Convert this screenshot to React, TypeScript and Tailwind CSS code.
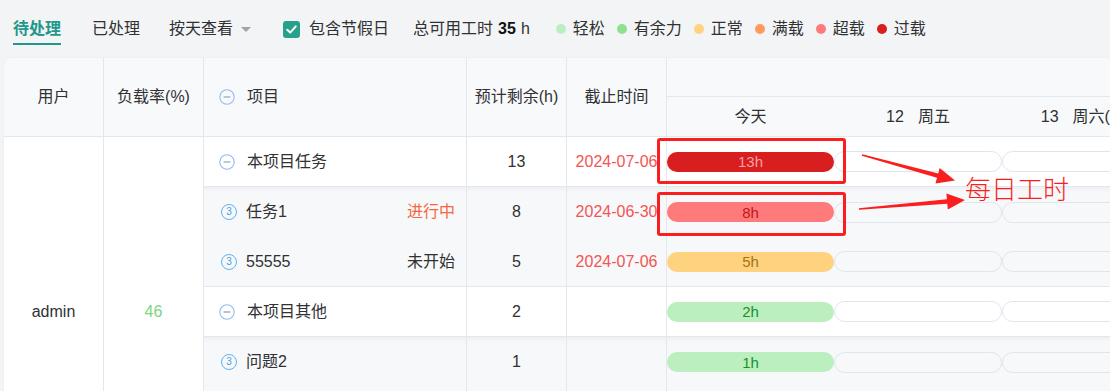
import React from "react";

type Level = "light" | "spare" | "normal" | "full" | "over" | "overload";

interface Row {
  name: string;
  kind: "group" | "task";
  status?: string;
  statusColor?: string;
  remain: string;
  due?: string;
  hours?: string;
  level?: Level;
  hidden?: boolean;
}

const pillStyle: Record<Level, string> = {
  light: "bg-[#bbefc0] text-[#1b912d]",
  spare: "bg-[#8fe08f] text-[#17702a]",
  normal: "bg-[#ffd27f] text-[#a27419]",
  full: "bg-[#ff9a5c] text-[#9a3d0d]",
  over: "bg-[#ff7b7b] text-[#c3141b]",
  overload: "bg-[#d81e1e] text-[#f3a3a3]",
};

const legend: { label: string; dot: string }[] = [
  { label: "轻松", dot: "bg-[#bbefc0]" },
  { label: "有余力", dot: "bg-[#8ee28e]" },
  { label: "正常", dot: "bg-[#ffd27f]" },
  { label: "满载", dot: "bg-[#ff9a5c]" },
  { label: "超载", dot: "bg-[#ff7b7b]" },
  { label: "过载", dot: "bg-[#d81e1e]" },
];

// last two rows sit below the fold, they only keep "admin" centred
const rows: Row[] = [
  { name: "本项目任务", kind: "group", remain: "13", due: "2024-07-06", hours: "13h", level: "overload" },
  { name: "任务1", kind: "task", status: "进行中", statusColor: "text-[#f5683d]", remain: "8", due: "2024-06-30", hours: "8h", level: "over" },
  { name: "55555", kind: "task", status: "未开始", statusColor: "text-[#303133]", remain: "5", due: "2024-07-06", hours: "5h", level: "normal" },
  { name: "本项目其他", kind: "group", remain: "2", hours: "2h", level: "light" },
  { name: "问题2", kind: "task", remain: "1", hours: "1h", level: "light" },
  { name: "", kind: "task", remain: "", hidden: true },
  { name: "", kind: "group", remain: "", hidden: true },
];

function MinusCircle() {
  return (
    <svg width="16" height="16" viewBox="0 0 16 16" className="shrink-0">
      <circle cx="8" cy="8" r="7.2" fill="none" stroke="#93b9f2" strokeWidth="1.1" />
      <line x1="4.6" y1="8" x2="11.4" y2="8" stroke="#7f95b8" strokeWidth="1.1" />
    </svg>
  );
}

function CountBadge() {
  return (
    <span className="w-[16px] h-[16px] shrink-0 rounded-full border border-[#5ab3f6] text-[#3d9ff0] text-[10px] leading-none flex items-center justify-center ml-[2px]">
      3
    </span>
  );
}

export default function App() {
  return (
    <div className="relative w-[1110px] h-[391px] overflow-hidden bg-[#f3f4f6] text-[#303133] text-[16px] font-['Liberation_Sans','Noto_Sans_CJK_SC',sans-serif]">
      {/* toolbar */}
      <div className="h-[58px] flex items-center pl-[13px] leading-[22px]">
        <span className="mt-[5px] pb-[3px] border-b-2 border-[#21988a] text-[#21988a] font-bold">待处理</span>
        <span className="ml-[31px]">已处理</span>
        <span className="ml-[29px]">按天查看</span>
        <span className="ml-[8px] w-0 h-0 border-l-[5px] border-r-[5px] border-t-[5px] border-l-transparent border-r-transparent border-t-[#a0a4ab]" />
        <span className="ml-[32px] w-[17px] h-[17px] rounded-[3px] bg-[#27a18b] flex items-center justify-center">
          <svg width="13" height="13" viewBox="0 0 13 13">
            <polyline points="2.2,6.8 5.2,9.6 10.8,3.4" fill="none" stroke="white" strokeWidth="2" strokeLinecap="round" strokeLinejoin="round" />
          </svg>
        </span>
        <span className="ml-[9px]">包含节假日</span>
        <span className="ml-[24px]">总可用工时</span>
        <span className="ml-[5px] font-bold text-[#111]">35</span>
        <span className="ml-[5px]">h</span>
        <div className="ml-[26px] flex items-center">
          {legend.map((l, i) => (
            <div key={l.label} className={`flex items-center ${i === 0 ? "" : "ml-[12px]"}`}>
              <span className={`w-[10px] h-[10px] rounded-full ${l.dot}`} />
              <span className="ml-[7px]">{l.label}</span>
            </div>
          ))}
        </div>
      </div>

      {/* table */}
      <div className="ml-[4px] w-[1163px] rounded-tl-[8px] overflow-hidden shadow-[0_0_3px_rgba(0,0,0,0.05)] grid grid-cols-[100px_100px_263px_100px_100px_500px] grid-rows-[79px_repeat(7,50px)] leading-[22px]">
        <div className="bg-[#f8f9fb] border-r border-b border-[#e3e8ef] flex items-center justify-center">用户</div>
        <div className="bg-[#f8f9fb] border-r border-b border-[#e3e8ef] flex items-center justify-center">负载率(%)</div>
        <div className="bg-[#f8f9fb] border-r border-b border-[#e3e8ef] flex items-center pl-[15px]">
          <MinusCircle />
          <span className="ml-[12px]">项目</span>
        </div>
        <div className="bg-[#f8f9fb] border-r border-b border-[#e3e8ef] flex items-center justify-center">预计剩余(h)</div>
        <div className="bg-[#f8f9fb] border-r border-b border-[#e3e8ef] flex items-center justify-center">截止时间</div>
        <div className="bg-[#f8f9fb] border-b border-[#e3e8ef] flex flex-col">
          <div className="h-[39px] border-b border-[#e3e8ef]" />
          <div className="flex-1 flex items-center">
            <div className="w-[167px] shrink-0 text-center">今天</div>
            <div className="w-[168px] shrink-0 text-center">
              12<span className="ml-[14px]">周五</span>
            </div>
            <div className="w-[168px] shrink-0 text-center whitespace-nowrap">
              13<span className="ml-[14px]">周六(休)</span>
            </div>
          </div>
        </div>

        <div className="row-span-7 bg-white border-r border-[#e3e8ef] flex items-center justify-center">admin</div>
        <div className="row-span-7 bg-white border-r border-[#e3e8ef] flex items-center justify-center text-[#7fd47f]">46</div>

        {rows.map((r, idx) => {
          const next = rows[idx + 1];
          const line = r.kind === "group" || !next || next.kind === "group" ? "border-b" : "";
          const bg =
            r.kind === "group"
              ? "bg-white"
              : rows[idx - 1]?.kind === "group"
              ? "bg-[#f7f8fa] shadow-[inset_0_7px_7px_-7px_rgba(0,0,0,0.07)]"
              : "bg-[#f7f8fa]";
          const cell = `${bg} ${line} border-[#e3e8ef]`;
          return (
            <React.Fragment key={idx}>
              <div className={`${cell} border-r flex items-center pl-[15px] pr-[11px]`}>
                {!r.hidden && (r.kind === "group" ? <MinusCircle /> : <CountBadge />)}
                <span className={r.kind === "group" ? "ml-[12px]" : "ml-[9px]"}>{r.name}</span>
                {r.status && <span className={`ml-auto ${r.statusColor}`}>{r.status}</span>}
              </div>
              <div className={`${cell} border-r flex items-center justify-center`}>{r.remain}</div>
              <div className={`${cell} border-r flex items-center justify-center text-[#f25555]`}>{r.due ?? ""}</div>
              <div className={`${cell} flex items-center`}>
                {!r.hidden && (
                  <>
                    {r.hours && r.level ? (
                      <div className={`w-[167px] h-[20px] shrink-0 rounded-full flex items-center justify-center text-[15px] leading-none ${pillStyle[r.level]}`}>
                        {r.hours}
                      </div>
                    ) : (
                      <div className="w-[167px] h-[21px] shrink-0 rounded-full border border-[#dfe5ee]" />
                    )}
                    <div className="w-[168px] h-[21px] shrink-0 rounded-full border border-[#dfe5ee]" />
                    <div className="w-[168px] h-[21px] shrink-0 rounded-full border border-[#dfe5ee]" />
                  </>
                )}
              </div>
            </React.Fragment>
          );
        })}
      </div>

      {/* annotation */}
      <div className="absolute left-[657px] top-[138px] w-[189px] h-[46px] border-[3px] border-[#fa1e1e] rounded-[3px]" />
      <div className="absolute left-[657px] top-[192px] w-[189px] h-[44px] border-[3px] border-[#fa1e1e] rounded-[3px]" />
      <svg className="absolute left-0 top-0 pointer-events-none" width="1110" height="391">
        <polygon
          points="861.8,155.8 862.2,154.2 938.2,173.6 939.7,168 955,180.5 935.5,183.4 937,177.8"
          fill="#fa1e1e"
        />
        <polygon
          points="858.9,208.2 859.1,209.8 947.3,203.7 947.8,209.5 965,200 946.4,193.5 946.9,199.3"
          fill="#fa1e1e"
        />
      </svg>
      <div className="absolute left-[965px] top-[175px] text-[26px] leading-[26px] text-[#fa1e1e] font-['Noto_Sans_CJK_SC',sans-serif] font-light">
        每日工时
      </div>
    </div>
  );
}
